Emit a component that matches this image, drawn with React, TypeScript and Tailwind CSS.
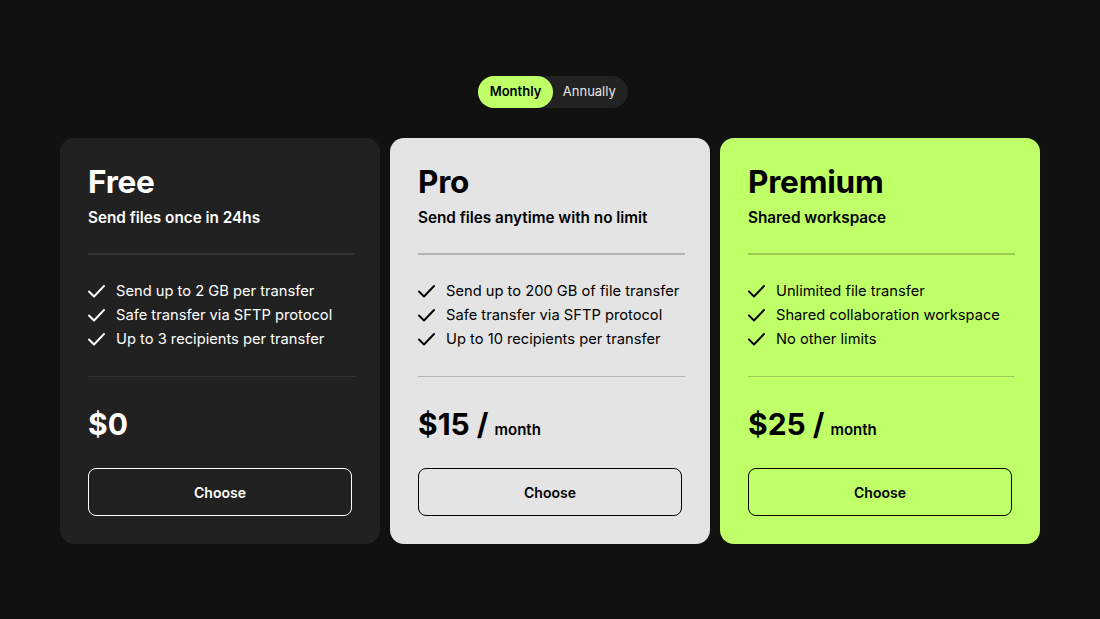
interface Plan {
  name: string;
  subtitle: string;
  features: string[];
  price: string;
  perMonth: boolean;
  card: string;
  text: string;
  divider: string;
  button: string;
}

const plans: Plan[] = [
  {
    name: 'Free',
    subtitle: 'Send files once in 24hs',
    features: ['Send up to 2 GB per transfer', 'Safe transfer via SFTP protocol', 'Up to 3 recipients per transfer'],
    price: '$0',
    perMonth: false,
    card: 'bg-[#212121]',
    text: 'text-white',
    divider: 'bg-[#333333]',
    button: 'border-white text-white',
  },
  {
    name: 'Pro',
    subtitle: 'Send files anytime with no limit',
    features: ['Send up to 200 GB of file transfer', 'Safe transfer via SFTP protocol', 'Up to 10 recipients per transfer'],
    price: '$15 /',
    perMonth: true,
    card: 'bg-[#e4e4e4]',
    text: 'text-black',
    divider: 'bg-[#b4b4b4]',
    button: 'border-black text-black',
  },
  {
    name: 'Premium',
    subtitle: 'Shared workspace',
    features: ['Unlimited file transfer', 'Shared collaboration workspace', 'No other limits'],
    price: '$25 /',
    perMonth: true,
    card: 'bg-[#bfff67]',
    text: 'text-black',
    divider: 'bg-[#9bcc58]',
    button: 'border-black text-black',
  },
];

function Tick() {
  return (
    <svg width="17" height="13" viewBox="0 0 17 13" fill="none" className="shrink-0">
      <path d="M1 6.5 L6 11.5 L16 1" stroke="currentColor" strokeWidth="1.9" strokeLinecap="round" strokeLinejoin="round" />
    </svg>
  );
}

export default function App() {
  return (
    <div className="min-h-[619px] bg-[#111111] px-[60px] pt-[76px] font-['Inter',sans-serif]">
      {/* Billing toggle */}
      <div className="flex justify-center pl-[6px]">
        <div className="flex h-8 items-center rounded-full bg-[#222222] text-[13px]">
          <span className="flex h-8 items-center rounded-full bg-[#bfff67] px-[11.5px] font-semibold text-black">Monthly</span>
          <span className="flex h-8 items-center pl-[10px] pr-[12px] text-[#e6e6e6]">Annually</span>
        </div>
      </div>

      {/* Plans */}
      <div className="mt-[30px] grid grid-cols-3 gap-[10px]">
        {plans.map((p) => (
          <div key={p.name} className={`h-[406px] rounded-[14px] px-7 pt-[25px] ${p.card} ${p.text}`}>
            <h2 className="text-[31.5px] font-bold leading-[38px] tracking-[-0.2px]">{p.name}</h2>
            <p className="mt-[7px] text-[15.3px] font-semibold leading-[20px]">{p.subtitle}</p>
            <div className={`mt-[25px] h-[2px] w-[267px] ${p.divider}`} />
            <ul className="mt-[24px] flex flex-col">
              {p.features.map((f) => (
                <li key={f} className="flex h-6 items-center gap-[11px] whitespace-nowrap text-[14.7px]">
                  <Tick />
                  <span>{f}</span>
                </li>
              ))}
            </ul>
            <div className={`mt-[25px] h-[1px] w-[267px] ${p.divider}`} />
            <div className="mt-[28px] flex items-baseline gap-[6px]">
              <span className="text-[30px] font-bold leading-[38px]">{p.price}</span>
              {p.perMonth && <span className="text-[15px] font-semibold">month</span>}
            </div>
            <button className={`mt-[25px] h-12 w-[264px] rounded-lg border text-[14px] font-semibold ${p.button}`}>
              Choose
            </button>
          </div>
        ))}
      </div>
    </div>
  );
}
